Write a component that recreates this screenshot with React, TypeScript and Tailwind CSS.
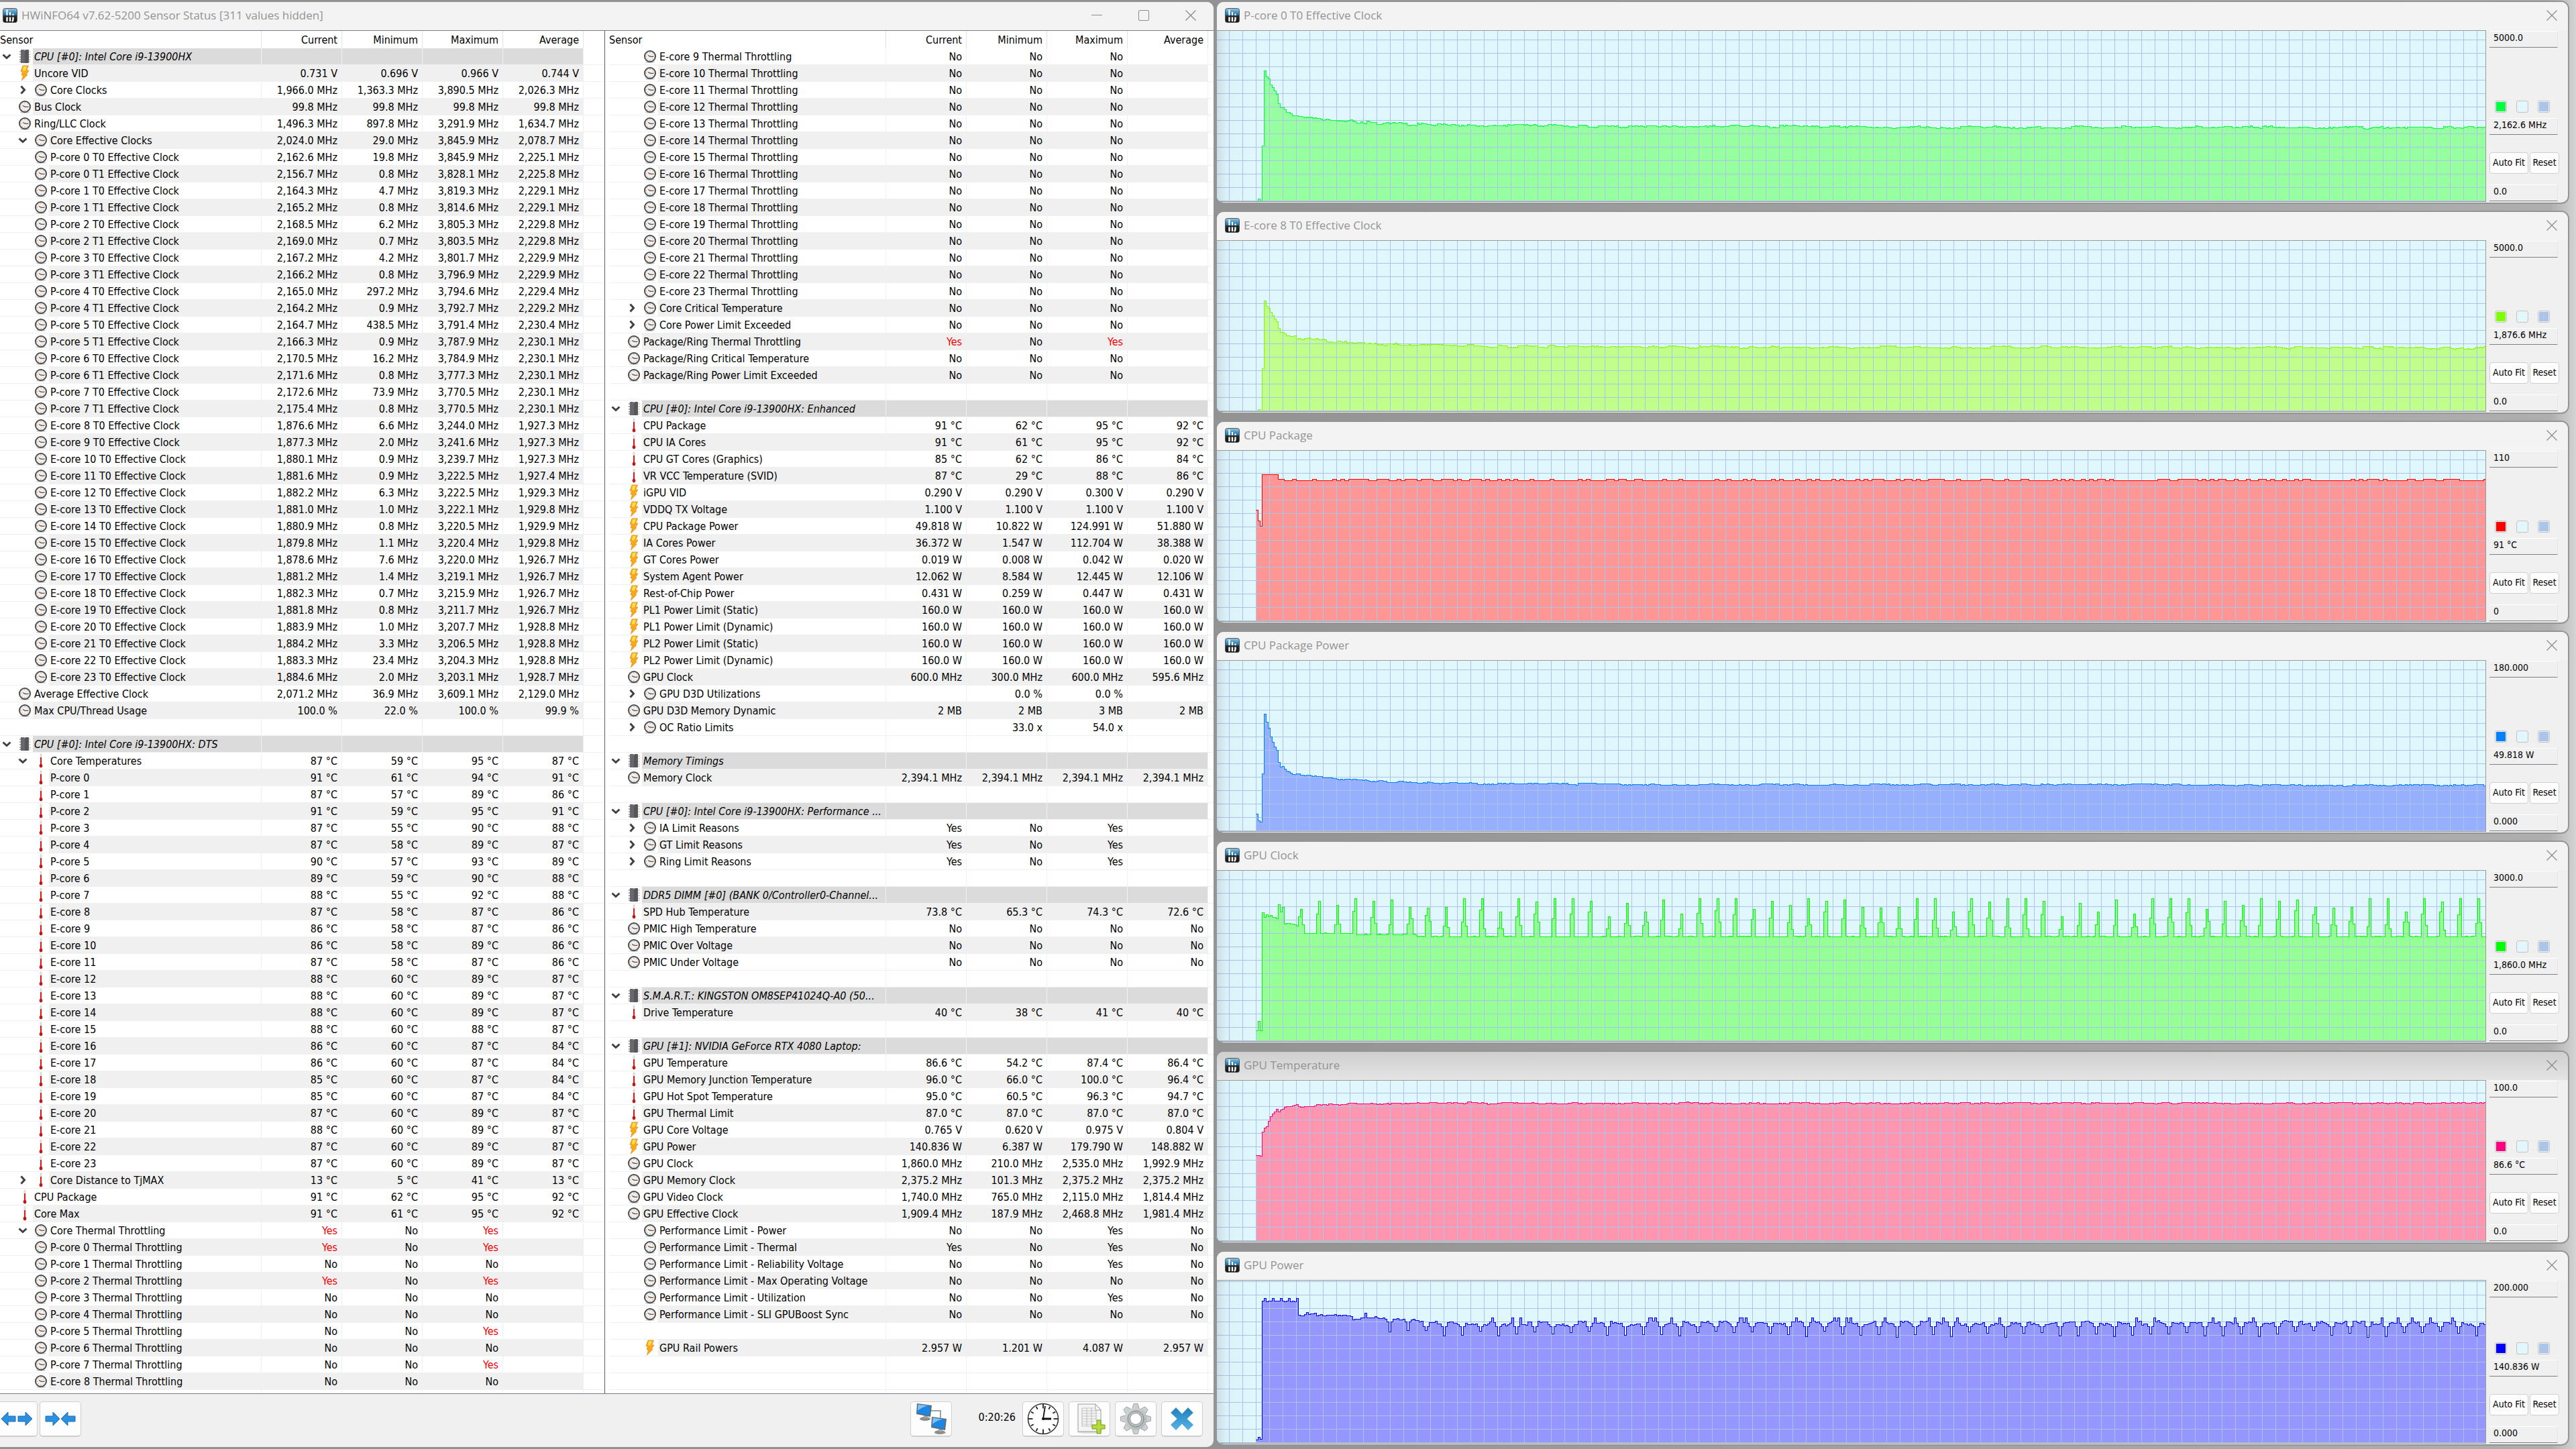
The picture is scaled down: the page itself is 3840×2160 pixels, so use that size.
import { useId } from "react";

type IconName = "clock" | "bolt" | "temp" | "chip";
type Row = {
  label?: string;
  icon?: IconName;
  level?: 1 | 2;
  toggle?: "open" | "closed";
  group?: boolean;
  values?: string[];
  alert?: boolean;
};

// ---------- row helpers ----------

const gap: Row = {};

const group = (label: string): Row => ({ label, icon: "chip", level: 1, toggle: "open", group: true });

const row = (icon: IconName, level: 1 | 2, label: string, values: string, extra: Partial<Row> = {}): Row => ({
  label,
  icon,
  level,
  values: values.split("|"),
  ...extra,
});

const withUnit = (values: string, unit: string) =>
  values
    .split("|")
    .map((v) => (v ? `${v} ${unit}` : ""))
    .join("|");

const clk = (level: 1 | 2, label: string, values: string, extra?: Partial<Row>) =>
  row("clock", level, label, withUnit(values, "MHz"), extra);
const tmp = (level: 1 | 2, label: string, values: string, extra?: Partial<Row>) =>
  row("temp", level, label, withUnit(values, "°C"), extra);
const volt = (label: string, values: string) => row("bolt", 1, label, withUnit(values, "V"));
const watt = (label: string, values: string, level: 1 | 2 = 1) => row("bolt", level, label, withUnit(values, "W"));
const flag = (level: 1 | 2, label: string, values: string, extra?: Partial<Row>) =>
  row("clock", level, label, values, extra);

const effectiveClocks: [string, string][] = [
  ["P-core 0 T0", "2,162.6|19.8|3,845.9|2,225.1"],
  ["P-core 0 T1", "2,156.7|0.8|3,828.1|2,225.8"],
  ["P-core 1 T0", "2,164.3|4.7|3,819.3|2,229.1"],
  ["P-core 1 T1", "2,165.2|0.8|3,814.6|2,229.1"],
  ["P-core 2 T0", "2,168.5|6.2|3,805.3|2,229.8"],
  ["P-core 2 T1", "2,169.0|0.7|3,803.5|2,229.8"],
  ["P-core 3 T0", "2,167.2|4.2|3,801.7|2,229.9"],
  ["P-core 3 T1", "2,166.2|0.8|3,796.9|2,229.9"],
  ["P-core 4 T0", "2,165.0|297.2|3,794.6|2,229.4"],
  ["P-core 4 T1", "2,164.2|0.9|3,792.7|2,229.2"],
  ["P-core 5 T0", "2,164.7|438.5|3,791.4|2,230.4"],
  ["P-core 5 T1", "2,166.3|0.9|3,787.9|2,230.1"],
  ["P-core 6 T0", "2,170.5|16.2|3,784.9|2,230.1"],
  ["P-core 6 T1", "2,171.6|0.8|3,777.3|2,230.1"],
  ["P-core 7 T0", "2,172.6|73.9|3,770.5|2,230.1"],
  ["P-core 7 T1", "2,175.4|0.8|3,770.5|2,230.1"],
  ["E-core 8 T0", "1,876.6|6.6|3,244.0|1,927.3"],
  ["E-core 9 T0", "1,877.3|2.0|3,241.6|1,927.3"],
  ["E-core 10 T0", "1,880.1|0.9|3,239.7|1,927.3"],
  ["E-core 11 T0", "1,881.6|0.9|3,222.5|1,927.4"],
  ["E-core 12 T0", "1,882.2|6.3|3,222.5|1,929.3"],
  ["E-core 13 T0", "1,881.0|1.0|3,222.1|1,929.8"],
  ["E-core 14 T0", "1,880.9|0.8|3,220.5|1,929.9"],
  ["E-core 15 T0", "1,879.8|1.1|3,220.4|1,929.8"],
  ["E-core 16 T0", "1,878.6|7.6|3,220.0|1,926.7"],
  ["E-core 17 T0", "1,881.2|1.4|3,219.1|1,926.7"],
  ["E-core 18 T0", "1,882.3|0.7|3,215.9|1,926.7"],
  ["E-core 19 T0", "1,881.8|0.8|3,211.7|1,926.7"],
  ["E-core 20 T0", "1,883.9|1.0|3,207.7|1,928.8"],
  ["E-core 21 T0", "1,884.2|3.3|3,206.5|1,928.8"],
  ["E-core 22 T0", "1,883.3|23.4|3,204.3|1,928.8"],
  ["E-core 23 T0", "1,884.6|2.0|3,203.1|1,928.7"],
];

const coreTemps = [
  "91|61|94|91", "87|57|89|86", "91|59|95|91", "87|55|90|88", "87|58|89|87", "90|57|93|89",
  "89|59|90|88", "88|55|92|88", "87|58|87|86", "86|58|87|86", "86|58|89|86", "87|58|87|86",
  "88|60|89|87", "88|60|89|87", "88|60|89|87", "88|60|88|87", "86|60|87|84", "86|60|87|84",
  "85|60|87|84", "85|60|87|84", "87|60|89|87", "88|60|89|87", "87|60|89|87", "87|60|89|87",
];

const throttling = [
  "Yes|No|Yes|", "No|No|No|", "Yes|No|Yes|", "No|No|No|", "No|No|No|", "No|No|Yes|", "No|No|No|", "No|No|Yes|", "No|No|No|",
];

const coreName = (i: number) => `${i < 8 ? "P" : "E"}-core ${i}`;

const leftRows: Row[] = [
  group("CPU [#0]: Intel Core i9-13900HX"),
  volt("Uncore VID", "0.731|0.696|0.966|0.744"),
  clk(2, "Core Clocks", "1,966.0|1,363.3|3,890.5|2,026.3", { toggle: "closed" }),
  clk(1, "Bus Clock", "99.8|99.8|99.8|99.8"),
  clk(1, "Ring/LLC Clock", "1,496.3|897.8|3,291.9|1,634.7"),
  clk(2, "Core Effective Clocks", "2,024.0|29.0|3,845.9|2,078.7", { toggle: "open" }),
  ...effectiveClocks.map(([name, values]) => clk(2, `${name} Effective Clock`, values)),
  clk(1, "Average Effective Clock", "2,071.2|36.9|3,609.1|2,129.0"),
  flag(1, "Max CPU/Thread Usage", "100.0 %|22.0 %|100.0 %|99.9 %"),
  gap,
  group("CPU [#0]: Intel Core i9-13900HX: DTS"),
  tmp(2, "Core Temperatures", "87|59|95|87", { toggle: "open" }),
  ...coreTemps.map((values, i) => tmp(2, coreName(i), values)),
  tmp(2, "Core Distance to TjMAX", "13|5|41|13", { toggle: "closed" }),
  tmp(1, "CPU Package", "91|62|95|92"),
  tmp(1, "Core Max", "91|61|95|92"),
  flag(2, "Core Thermal Throttling", "Yes|No|Yes|", { toggle: "open", alert: true }),
  ...throttling.map((values, i) => flag(2, `${coreName(i)} Thermal Throttling`, values, { alert: true })),
];

const rightRows: Row[] = [
  ...Array.from({ length: 15 }, (_, i) => flag(2, `E-core ${i + 9} Thermal Throttling`, "No|No|No|")),
  flag(2, "Core Critical Temperature", "No|No|No|", { toggle: "closed" }),
  flag(2, "Core Power Limit Exceeded", "No|No|No|", { toggle: "closed" }),
  flag(1, "Package/Ring Thermal Throttling", "Yes|No|Yes|", { alert: true }),
  flag(1, "Package/Ring Critical Temperature", "No|No|No|"),
  flag(1, "Package/Ring Power Limit Exceeded", "No|No|No|"),
  gap,
  group("CPU [#0]: Intel Core i9-13900HX: Enhanced"),
  tmp(1, "CPU Package", "91|62|95|92"),
  tmp(1, "CPU IA Cores", "91|61|95|92"),
  tmp(1, "CPU GT Cores (Graphics)", "85|62|86|84"),
  tmp(1, "VR VCC Temperature (SVID)", "87|29|88|86"),
  volt("iGPU VID", "0.290|0.290|0.300|0.290"),
  volt("VDDQ TX Voltage", "1.100|1.100|1.100|1.100"),
  watt("CPU Package Power", "49.818|10.822|124.991|51.880"),
  watt("IA Cores Power", "36.372|1.547|112.704|38.388"),
  watt("GT Cores Power", "0.019|0.008|0.042|0.020"),
  watt("System Agent Power", "12.062|8.584|12.445|12.106"),
  watt("Rest-of-Chip Power", "0.431|0.259|0.447|0.431"),
  watt("PL1 Power Limit (Static)", "160.0|160.0|160.0|160.0"),
  watt("PL1 Power Limit (Dynamic)", "160.0|160.0|160.0|160.0"),
  watt("PL2 Power Limit (Static)", "160.0|160.0|160.0|160.0"),
  watt("PL2 Power Limit (Dynamic)", "160.0|160.0|160.0|160.0"),
  clk(1, "GPU Clock", "600.0|300.0|600.0|595.6"),
  flag(2, "GPU D3D Utilizations", "|0.0 %|0.0 %|", { toggle: "closed" }),
  flag(1, "GPU D3D Memory Dynamic", "2 MB|2 MB|3 MB|2 MB"),
  flag(2, "OC Ratio Limits", "|33.0 x|54.0 x|", { toggle: "closed" }),
  gap,
  group("Memory Timings"),
  clk(1, "Memory Clock", "2,394.1|2,394.1|2,394.1|2,394.1"),
  gap,
  group("CPU [#0]: Intel Core i9-13900HX: Performance ..."),
  flag(2, "IA Limit Reasons", "Yes|No|Yes|", { toggle: "closed" }),
  flag(2, "GT Limit Reasons", "Yes|No|Yes|", { toggle: "closed" }),
  flag(2, "Ring Limit Reasons", "Yes|No|Yes|", { toggle: "closed" }),
  gap,
  group("DDR5 DIMM [#0] (BANK 0/Controller0-Channel..."),
  tmp(1, "SPD Hub Temperature", "73.8|65.3|74.3|72.6"),
  flag(1, "PMIC High Temperature", "No|No|No|No"),
  flag(1, "PMIC Over Voltage", "No|No|No|No"),
  flag(1, "PMIC Under Voltage", "No|No|No|No"),
  gap,
  group("S.M.A.R.T.: KINGSTON OM8SEP41024Q-A0 (50..."),
  tmp(1, "Drive Temperature", "40|38|41|40"),
  gap,
  group("GPU [#1]: NVIDIA GeForce RTX 4080 Laptop:"),
  tmp(1, "GPU Temperature", "86.6|54.2|87.4|86.4"),
  tmp(1, "GPU Memory Junction Temperature", "96.0|66.0|100.0|96.4"),
  tmp(1, "GPU Hot Spot Temperature", "95.0|60.5|96.3|94.7"),
  tmp(1, "GPU Thermal Limit", "87.0|87.0|87.0|87.0"),
  volt("GPU Core Voltage", "0.765|0.620|0.975|0.804"),
  watt("GPU Power", "140.836|6.387|179.790|148.882"),
  clk(1, "GPU Clock", "1,860.0|210.0|2,535.0|1,992.9"),
  clk(1, "GPU Memory Clock", "2,375.2|101.3|2,375.2|2,375.2"),
  clk(1, "GPU Video Clock", "1,740.0|765.0|2,115.0|1,814.4"),
  clk(1, "GPU Effective Clock", "1,909.4|187.9|2,468.8|1,981.4"),
  flag(2, "Performance Limit - Power", "No|No|Yes|No"),
  flag(2, "Performance Limit - Thermal", "Yes|No|Yes|No"),
  flag(2, "Performance Limit - Reliability Voltage", "No|No|Yes|No"),
  flag(2, "Performance Limit - Max Operating Voltage", "No|No|No|No"),
  flag(2, "Performance Limit - Utilization", "No|No|Yes|No"),
  flag(2, "Performance Limit - SLI GPUBoost Sync", "No|No|No|No"),
  gap,
  watt("GPU Rail Powers", "2.957|1.201|4.087|2.957", 2),
  gap,
  gap,
];

// ---------- icons ----------

function Chevron({ open }: { open: boolean }) {
  return (
    <svg viewBox="0 0 14 14" className="size-3.5" fill="none" stroke="#404040" strokeWidth="3">
      <path d={open ? "M1.500 4.500 7 9.500l5.500-5" : "M4.500 1.500 9.500 7l-5 5.500"} />
    </svg>
  );
}

function RowIcon({ name }: { name: IconName }) {
  if (name === "clock") {
    return (
      <svg viewBox="0 0 20 20" className="size-5">
        <ellipse cx="10" cy="18.500" rx="7" ry="1.300" fill="#c8c8c8" />
        <circle cx="10" cy="10" r="8" fill="#f0f0ee" stroke="#444" strokeWidth="2" />
        <circle cx="10" cy="10" r="6.800" fill="none" stroke="#cfcfcf" strokeWidth="0.800" />
        <path d="M10 4v1M10 15v1M4 10h1M15 10h1M5.800 5.800l.6.600M14.200 5.800l-.6.600M5.800 14.200l.6-.6M14.200 14.200l-.6-.6" stroke="#888" strokeWidth="0.900" />
        <path d="M7 8.500 10.500 10.300H15" fill="none" stroke="#6b4a3c" strokeWidth="1.200" />
        <circle cx="10.500" cy="10.200" r="1" fill="#d05a30" />
      </svg>
    );
  }
  if (name === "bolt") {
    return (
      <svg viewBox="0 0 16 24" className="h-6 w-4">
        <path d="M5 1 13.500 1 10.500 8 14 8 10 14.500 12 14.500 3.500 23 5.500 15 3 15 4.500 10 2 9.500Z" fill="#fba919" stroke="#d98a12" strokeWidth="0.700" />
        <path d="M6 2 11 2 8.500 8.500 5 8.500Z" fill="#ffe14d" />
      </svg>
    );
  }
  if (name === "temp") {
    return (
      <svg viewBox="0 0 8 24" className="h-6 w-2">
        <rect x="2.500" y="1" width="3" height="22" rx="1.500" fill="#dcdcdc" />
        <rect x="3" y="7" width="2" height="12" fill="#d62020" />
        <ellipse cx="4" cy="19.500" rx="2.300" ry="2.800" fill="#c41414" />
      </svg>
    );
  }
  return (
    <svg viewBox="0 0 18 22" className="h-[22px] w-[18px]">
      <path d="M1 4h16M1 8h16M1 12h16M1 16h16M1 19h16" stroke="#8a8a8a" strokeWidth="1.400" strokeDasharray="2 1" />
      <rect x="3" y="1" width="12" height="20" rx="1" fill="#55575a" />
      <rect x="3" y="1" width="6" height="20" fill="#66686b" />
      <path d="M7.500 1a1.500 1.500 0 0 0 3 0z" fill="#a8a8a8" />
    </svg>
  );
}

function AppLogo() {
  const id = useId();
  return (
    <svg viewBox="0 0 22 22" className="size-[22px] shrink-0">
      <linearGradient id={id} x1="0" y1="0" x2="0" y2="1">
        <stop offset="0" stopColor="#9cc3da" />
        <stop offset="0.500" stopColor="#0a6ea8" />
        <stop offset="0.520" stopColor="#2a2a2a" />
        <stop offset="1" stopColor="#111" />
      </linearGradient>
      <rect x="0.500" y="0.500" width="21" height="21" rx="3" fill={`url(#${id})`} stroke="#4d5a62" />
      <path d="M6.500 2.500V11M11 6v5M15.500 8.500V11" stroke="#fff" strokeWidth="2.200" />
      <path d="M6.500 13.500V20M11 13.500V20M15.500 13.500V17q0 1.500-1.500 3" fill="none" stroke="#fff" strokeWidth="2.400" />
    </svg>
  );
}

function CloseIcon() {
  return (
    <svg viewBox="0 0 16 16" className="size-4" fill="none" stroke="#8c8c8c" strokeWidth="1.300">
      <path d="M.5.5l15 15M15.500.5l-15 15" />
    </svg>
  );
}

function ArrowPair({ inward }: { inward?: boolean }) {
  const left = "M1 14 11 4v6h11v8H11v6z";
  const right = "M47 14 37 4v6H26v8h11v6z";
  return (
    <svg viewBox="0 0 48 28" className="h-7 w-12" fill="#2b90e0" stroke="#1c6fb5" strokeWidth="1">
      <path d={left} transform={inward ? "translate(24 0)" : undefined} />
      <path d={right} transform={inward ? "translate(-24 0)" : undefined} />
    </svg>
  );
}

function Monitor({ x, y }: { x: number; y: number }) {
  return (
    <g transform={`translate(${x} ${y})`}>
      <ellipse cx="14" cy="24" rx="8" ry="3" fill="#8d8d8d" />
      <path d="M12 17h6v6h-6z" fill="#a5a5a5" />
      <path d="M2 1 24 4 22 21 1 17z" fill="#5e6a74" />
      <path d="M3.500 2.500 22 5.200 20.500 19 2.500 15.500z" fill="#1c86e4" />
      <path d="M3.500 2.500 18 4.600Q9 7 2.800 12z" fill="#7fc0f5" />
    </g>
  );
}

function NetworkIcon() {
  return (
    <svg viewBox="0 0 48 48" className="size-12">
      <path d="M22 12h16v12" fill="none" stroke="#7b858d" strokeWidth="1.500" />
      <ellipse cx="38" cy="45" rx="9" ry="2" fill="#d8d8d8" />
      <Monitor x={1} y={0} />
      <Monitor x={23} y={20} />
    </svg>
  );
}

function WallClockIcon() {
  return (
    <svg viewBox="0 0 48 48" className="size-12">
      <circle cx="24" cy="24" r="22.500" fill="#fff" stroke="#333" strokeWidth="1.500" />
      {Array.from({ length: 12 }, (_, i) => (
        <path key={i} d={i % 3 ? "M24 3v4.500" : "M24 2v6.500"} stroke="#222" strokeWidth="1.800" transform={`rotate(${i * 30} 24 24)`} />
      ))}
      <path d="M24 24 27 5" stroke="#111" strokeWidth="1.800" />
      <path d="M24 24H36" stroke="#111" strokeWidth="3" />
      <circle cx="24" cy="24" r="2" fill="#111" />
    </svg>
  );
}

function LogIcon() {
  return (
    <svg viewBox="0 0 48 48" className="size-12">
      <ellipse cx="24" cy="44" rx="18" ry="2" fill="#dedede" />
      <path d="M7 2h26l8 9v32H7z" fill="#f5f5f5" stroke="#9a9a9a" />
      <path d="M33 2v9h8z" fill="#fff" stroke="#9a9a9a" />
      <path d="M13 8h18M13 12h22M13 16h22M13 20h22M13 24h22M13 28h18M13 32h16M13 35h16M13 8v27M20 8v27M27 8v27M34 12v16" stroke="#c3c3c3" strokeWidth="1.200" />
      <path d="M35 26h6v7h6v6h-6v7h-6v-7h-7v-6h7z" fill="#b5da3a" stroke="#6f9a1c" />
    </svg>
  );
}

function GearIcon() {
  const id = useId();
  return (
    <svg viewBox="0 0 48 48" className="size-12">
      <linearGradient id={id} gradientUnits="userSpaceOnUse" x1="0" y1="0" x2="48" y2="48">
        <stop offset="0" stopColor="#dde0e1" />
        <stop offset="1" stopColor="#a4abad" />
      </linearGradient>
      <g fill={`url(#${id})`} stroke="#8f9698" strokeWidth="0.800">
        {Array.from({ length: 8 }, (_, i) => (
          <path key={i} d="M18.500 10 21 1.500h6l2.500 8.500z" transform={`rotate(${i * 45} 24 24)`} />
        ))}
      </g>
      <circle cx="24" cy="24" r="16.500" fill={`url(#${id})`} />
      <circle cx="24" cy="24" r="12" fill="#b9bfc1" stroke="#7e8587" />
      <circle cx="24" cy="24" r="8.500" fill="#fff" stroke="#8a9193" />
    </svg>
  );
}

function ExitIcon() {
  const id = useId();
  return (
    <svg viewBox="0 0 36 36" className="size-9">
      <linearGradient id={id} x1="0" y1="0" x2="0" y2="1">
        <stop offset="0" stopColor="#1f7fb8" />
        <stop offset="1" stopColor="#55b4ea" />
      </linearGradient>
      <path d="M9 1.500 18 11 27 1.500 34.500 9 25 18 34.500 27 27 34.500 18 25 9 34.500 1.500 27 11 18 1.500 9z" fill={`url(#${id})`} stroke="#2b84ba" strokeWidth="0.600" />
    </svg>
  );
}

// ---------- sensor table ----------

const columns = ["Current", "Minimum", "Maximum", "Average"];

function SensorTable({ rows, caption }: { rows: Row[]; caption: string }) {
  return (
    <table aria-label={caption} className="w-full table-fixed border-separate border-spacing-0 text-base text-black">
      <colgroup>
        <col />
        {columns.map((c) => (
          <col key={c} className="w-[120px]" />
        ))}
        <col className={caption === "Sensors" ? "w-[31px]" : "w-2"} />
      </colgroup>
      <thead>
        <tr className="h-[26px]">
          <th className="border-r border-[#e2e2e2] p-0 pt-0.5 text-left leading-6 font-normal">Sensor</th>
          {columns.map((c) => (
            <th key={c} className="border-r border-[#e2e2e2] p-0 pt-0.5 pr-1.5 text-right leading-6 font-normal">
              {c}
            </th>
          ))}
          <td />
        </tr>
      </thead>
      <tbody>
        {rows.map((r, i) => {
          const tone = r.group ? "bg-[#dbdbdb]" : r.label && i % 2 ? "bg-[#f0f0f0]" : "";
          return (
            <tr key={i} className="h-[25px]">
              <td className="border-r border-b border-[#f0f0f0] p-0">
                {r.label && (
                  <div className={`flex h-6 ${r.level === 2 ? "pl-6" : ""}`}>
                    <span className="flex w-5 shrink-0 items-center justify-center">
                      {r.toggle && (
                        <button aria-label={`Toggle ${r.label}`}>
                          <Chevron open={r.toggle === "open"} />
                        </button>
                      )}
                    </span>
                    <span className="flex w-[29px] shrink-0 items-center justify-center pl-1">
                      <RowIcon name={r.icon!} />
                    </span>
                    <span className={`min-w-0 grow truncate pt-0.5 pl-0.5 leading-[22px] ${tone} ${r.group ? "italic" : ""}`}>{r.label}</span>
                  </div>
                )}
              </td>
              {columns.map((c, k) => {
                const value = r.values?.[k] ?? "";
                const color = r.alert && value === "Yes" ? "text-[#f00000]" : "";
                return (
                  <td key={c} className={`border-r border-b border-[#f0f0f0] p-0 pt-0.5 pr-1.5 text-right leading-[22px] ${tone} ${color}`}>
                    {value}
                  </td>
                );
              })}
              <td className="border-b border-[#f0f0f0] p-0" />
            </tr>
          );
        })}
        <tr className="h-[5px]">
          {["name", ...columns].map((c) => (
            <td key={c} className="border-r border-[#f0f0f0] p-0" />
          ))}
          <td className="p-0" />
        </tr>
      </tbody>
    </table>
  );
}

const toolButton =
  "flex h-[53px] w-[62px] items-center justify-center rounded-[5px] border border-b-2 border-[#cfcfcf] bg-[#fdfdfd]";

function SensorWindow() {
  return (
    <section className="flex grow flex-col overflow-hidden rounded-r-xl border-y-2 border-r-2 border-[#949494] bg-[#f0f0f0]">
      <header className="flex h-[42px] items-center bg-[#f3f3f3] pr-[26px] pb-[3px] pl-1">
        <AppLogo />
        <h1 className="ml-1.5 font-['Open_Sans',sans-serif] text-[17px] text-[#939393]">
          HWiNFO64 v7.62-5200 Sensor Status [311 values hidden]
        </h1>
        <div className="ml-auto flex items-center gap-[54px]">
          <button aria-label="Minimize" className="flex size-4 items-center">
            <span className="h-px w-full bg-[#8c8c8c]" />
          </button>
          <button aria-label="Maximize" className="size-4 rounded-xs border border-[#8c8c8c]" />
          <button aria-label="Close">
            <CloseIcon />
          </button>
        </div>
      </header>
      <div className="grid grid-cols-[901fr_908fr] border-y border-[#7a7a86] bg-white">
        <SensorTable rows={leftRows} caption="Sensors" />
        <div className="min-w-0 border-l border-[#5f5f5f] pl-1.5">
          <SensorTable rows={rightRows} caption="Sensors, continued" />
        </div>
      </div>
      <footer className="flex grow items-start py-[11px] pr-4">
        <div className="-ml-1.5 flex gap-[3px]">
          <button className={toolButton} aria-label="Expand columns">
            <ArrowPair />
          </button>
          <button className={toolButton} aria-label="Shrink columns">
            <ArrowPair inward />
          </button>
        </div>
        <div className="ml-auto flex items-center">
          <button className={toolButton} aria-label="Remote sensors">
            <NetworkIcon />
          </button>
          <time className="mr-2.5 mb-1.5 ml-10 text-base">0:20:26</time>
          <div className="flex gap-[7px]">
            <button className={toolButton} aria-label="Reset timer">
              <WallClockIcon />
            </button>
            <button className={toolButton} aria-label="Start logging">
              <LogIcon />
            </button>
            <button className={toolButton} aria-label="Settings">
              <GearIcon />
            </button>
            <button className={toolButton} aria-label="Close sensors">
              <ExitIcon />
            </button>
          </div>
        </div>
      </footer>
    </section>
  );
}

// ---------- graphs ----------

const PLOT_WIDTH = 1891;
const STEP = 3;
const FIRST_X = 58;
const SAMPLES = 611;

// repeatable pseudo random value in 0..1
const rand = (n: number) => {
  const s = Math.sin(n * 127.1 + 311.7) * 43758.5453;
  return s - Math.floor(s);
};

// slow + fast wobble around zero, in whole pixels
const wobble = (i: number, seed: number, size: number) =>
  Math.round((rand(Math.floor(i / 5) + seed) - 0.5) * size + (rand(i + seed * 7) - 0.5) * size * 0.6);

function fillSamples(head: number[], tail: (i: number) => number) {
  return Array.from({ length: SAMPLES }, (_, i) => (i < head.length ? head[i] : Math.round(tail(i))));
}

const decayTo = (i: number, from: number, to: number, rate: number) => to + (from - to) * Math.exp(-(i - 18) / rate);

const pCore = fillSamples(
  [254, 250, 254, 171, 59, 68, 71, 80, 84, 89, 94, 108, 114, 114, 117, 121, 121, 123],
  (i) => decayTo(i, 124, 141, 32) + (i / SAMPLES) * 3 + wobble(i, 3, 3),
);
const eCore = fillSamples(
  [254, 251, 254, 190, 89, 97, 100, 106, 111, 116, 120, 130, 136, 136, 138, 141, 141, 142],
  (i) => decayTo(i, 143, 157, 32) + (i / SAMPLES) * 2 + wobble(i, 11, 3),
);
const cpuTemp = fillSamples([88, 104, 112, 35, 35, 35, 35, 35, 35, 35, 35], (i) => (rand(Math.floor(i / 2) + 40) > 0.58 ? 42 : 44));
const cpuPower = fillSamples(
  [228, 238, 240, 168, 79, 91, 100, 113, 121, 128, 133, 151, 158, 157, 161, 164, 165, 167],
  (i) => decayTo(i, 168, 183, 32) + (i / SAMPLES) * 2 + wobble(i, 23, 2),
);

const spikeTops = [57, 45, 51, 41, 45, 43, 54, 55, 54, 41, 41, 61, 41, 46, 41, 41, 45, 68, 48, 61, 43, 64, 41, 41, 41];
const gpuClock = fillSamples(
  [238, 224, 238, 62, 69, 65, 68, 66, 69, 69, 71, 50, 61, 54, 79, 78, 78, 79, 79, 80, 82],
  (i) => {
    const base = (i < 50 ? 93 : i < 80 ? 95 : 98) - (rand(i + 5) > 0.75 ? 1 : 0);
    const phase = (i - 22 + 9) % 9;
    const top = spikeTops[Math.floor((i - 18) / 9) % spikeTops.length];
    if (phase === 0) return top;
    if (phase === 8) return top + (base - top) * (0.25 + rand(i) * 0.5);
    if (phase === 1 && rand(i) > 0.5) return base - 10 - rand(i + 1) * 14;
    return base;
  },
);
const gpuTemp = fillSamples(
  [111, 111, 112, 76, 70, 68, 60, 53, 49, 46, 42, 46, 43, 42, 39, 38, 38, 38, 37, 36, 35, 38, 39, 39, 38, 38, 38],
  (i) => decayTo(i, 39, 33, 20) + wobble(i, 31, 2),
);
const gpuPower = fillSamples([237, 233, 236], (i) => {
  if (i < 21) return i % 4 === 0 ? 26 : 31 + (rand(i) > 0.6 ? -1 : 0);
  const base = i < 48 ? 50 : i < 80 ? 56 : 63;
  const phase = (i - 21) % 9;
  if (i > 60 && phase === 0) return base + 11 + rand(i) * 10;
  if (i > 60 && (phase === 8 || phase === 1)) return base + 5;
  if (rand(i + 77) > 0.92) return base - 8;
  return base + wobble(i, 57, 5);
});

type Graph = {
  title: string;
  max: string;
  value: string;
  min: string;
  line: string;
  fill: string;
  swatch: string;
  samples: number[];
  height: number;
  heightClass: string;
  shaded?: boolean;
};

const tall = { height: 254, heightClass: "h-[254px]" };

const graphs: Graph[] = [
  { title: "P-core 0 T0 Effective Clock", max: "5000.0", value: "2,162.6 MHz", min: "0.0", line: "#00ff40", fill: "#96ffa0", swatch: "bg-[#00ff40]", samples: pCore, ...tall },
  { title: "E-core 8 T0 Effective Clock", max: "5000.0", value: "1,876.6 MHz", min: "0.0", line: "#80ff00", fill: "#c0ff8c", swatch: "bg-[#80ff00]", samples: eCore, ...tall },
  { title: "CPU Package", max: "110", value: "91 °C", min: "0", line: "#ff0000", fill: "#ff9696", swatch: "bg-[#ff0000]", samples: cpuTemp, ...tall },
  { title: "CPU Package Power", max: "180.000", value: "49.818 W", min: "0.000", line: "#0080ff", fill: "#96b0ff", swatch: "bg-[#0080ff]", samples: cpuPower, ...tall },
  { title: "GPU Clock", max: "3000.0", value: "1,860.0 MHz", min: "0.0", line: "#00ff00", fill: "#96ff96", swatch: "bg-[#00ff00]", samples: gpuClock, ...tall },
  { title: "GPU Temperature", max: "100.0", value: "86.6 °C", min: "0.0", line: "#ff0080", fill: "#ff96b0", swatch: "bg-[#ff0080]", samples: gpuTemp, height: 239, heightClass: "h-[239px]", shaded: true },
  { title: "GPU Power", max: "200.000", value: "140.836 W", min: "0.000", line: "#0000ff", fill: "#9696ff", swatch: "bg-[#0000ff]", samples: gpuPower, height: 242, heightClass: "h-[242px]" },
];

function Plot({ graph }: { graph: Graph }) {
  const id = useId();
  const { samples, height } = graph;
  const trace = samples.map((y, i) => `${i ? "V" : `M${FIRST_X} `}${y}H${Math.min(FIRST_X + (i + 1) * STEP, PLOT_WIDTH)}`).join("");
  let grid = "";
  for (let x = 18; x < PLOT_WIDTH; x += 20) grid += `M${x} 0V${height}`;
  for (let y = height - 1; y > 0; y -= 20) grid += `M0 ${y}H${PLOT_WIDTH}`;

  return (
    <svg
      role="img"
      aria-label={`${graph.title} history`}
      viewBox={`0 0 ${PLOT_WIDTH} ${height}`}
      preserveAspectRatio="none"
      shapeRendering="crispEdges"
      className="size-full bg-[#e0f7fe]"
    >
      <linearGradient id={id}>
        <stop offset="0" stopColor="#000" stopOpacity="0.100" />
        <stop offset="0.250" stopColor="#000" stopOpacity="0.020" />
        <stop offset="1" stopColor="#000" stopOpacity="0" />
      </linearGradient>
      <path d={`${trace}V${height}H${FIRST_X}Z`} fill={graph.fill} />
      <path d={grid} fill="none" stroke="#aac4ea" strokeWidth="1" />
      <path d={trace} fill="none" stroke={graph.line} strokeWidth="1" />
      <rect width="58" height={height} fill={`url(#${id})`} />
    </svg>
  );
}

const field =
  "h-[25px] w-[102px] border-t border-r border-b border-t-white border-r-[#e6e6e6] border-b-[#808080] bg-transparent pb-[5px] pl-1.5";
const swatchButton = "size-[18px] rounded-[3px] border border-[#c4c4c4] bg-clip-content p-px";
const panelButton = "h-8 rounded border border-[#cfcfcf] bg-[#fdfdfd] pb-0.5 text-center";

function GraphWindow({ graph }: { graph: Graph }) {
  return (
    <section className="overflow-hidden rounded-xl border-2 border-[#959595] bg-[#f0f0f0] pb-px">
      <header
        className={`flex h-[42px] items-center pr-4 pb-[3px] pl-3 ${graph.shaded ? "bg-linear-to-b from-[#cfcfcf] to-[#e4e4e4]" : "bg-[#f3f3f3]"}`}
      >
        <AppLogo />
        <h2 className="ml-1.5 font-['Open_Sans',sans-serif] text-[17px] text-[#939393]">{graph.title}</h2>
        <button aria-label={`Close ${graph.title}`} className="ml-auto">
          <CloseIcon />
        </button>
      </header>
      <div className="flex">
        <div className="min-w-0 grow border-y border-r border-[#9a9a9a]">
          <div className={graph.heightClass}>
            <Plot graph={graph} />
          </div>
        </div>
        <div className="flex w-[122px] shrink-0 flex-col pt-px pb-px pl-[5px] text-sm text-black">
          <input className={field} aria-label="Graph maximum" defaultValue={graph.max} />
          <div className="mt-auto flex gap-3.5 pl-2">
            <button aria-label="Line color" className={`${swatchButton} ${graph.swatch}`} />
            <button aria-label="Background color" className={`${swatchButton} bg-[#e0f7fe]`} />
            <button aria-label="Grid color" className={`${swatchButton} bg-[#aac4ea]`} />
          </div>
          <input className={`mt-2 ${field}`} aria-label="Current value" readOnly value={graph.value} />
          <div className="mt-[26px] flex gap-0.5">
            <button className={`w-[58px] ${panelButton}`}>Auto Fit</button>
            <button className={`w-11 ${panelButton}`}>Reset</button>
          </div>
          <input className={`mt-4 ${field}`} aria-label="Graph minimum" defaultValue={graph.min} />
        </div>
      </div>
    </section>
  );
}

export default function App() {
  return (
    <main className="grid min-h-screen grid-cols-[1811fr_2018fr] gap-px bg-linear-to-r from-[#8f8f8f] from-40% via-[#aeaeae] via-99% to-[#d4d4d4] pt-px pr-2.5 pb-px font-['DejaVu_Sans_Condensed','Liberation_Sans',sans-serif]">
      <div className="flex min-w-0 flex-col">
        <SensorWindow />
      </div>
      <div className="flex min-w-0 flex-col gap-2.5">
        {graphs.map((g) => (
          <GraphWindow key={g.title} graph={g} />
        ))}
      </div>
    </main>
  );
}
